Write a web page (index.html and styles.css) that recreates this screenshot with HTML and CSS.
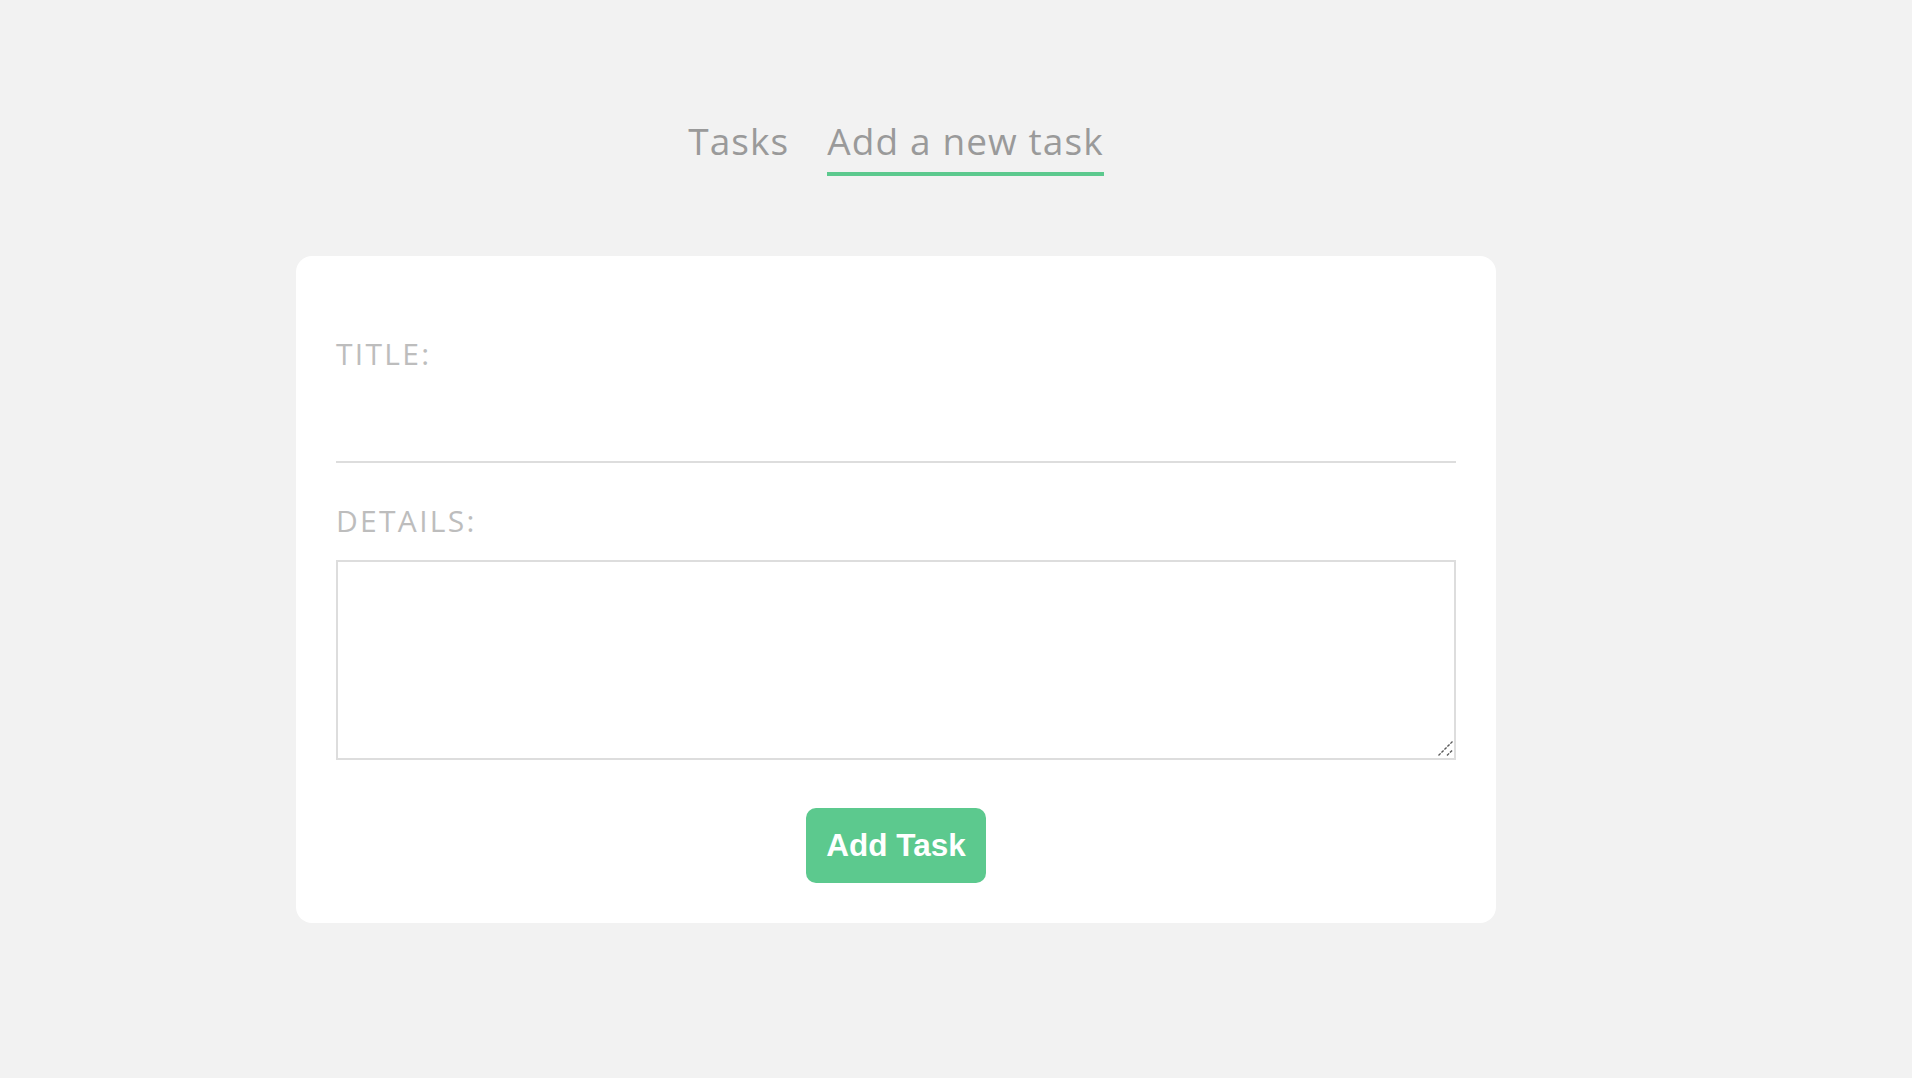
FILE: index.html
```html
<!DOCTYPE html>
<html lang="en">
<head>
<meta charset="utf-8">
<title>Add a new task</title>
<link rel="stylesheet" href="styles.css">
</head>
<body>
<div class="page">
  <nav class="tabs">
    <a class="tab" href="#">Tasks</a>
    <a class="tab tab-active" href="#">Add a new task</a>
  </nav>
  <form class="card">
    <label class="label" for="title">Title:</label>
    <input class="input" id="title" type="text">
    <label class="label label-details" for="details">Details:</label>
    <div class="textarea-wrap">
      <textarea class="textarea" id="details"></textarea>
      <svg class="grip" width="16" height="16" viewBox="0 0 16 16" aria-hidden="true">
        <path d="M0.5 14.5 L14.5 0.5 M9 14.5 L14.5 9" stroke="#5a5a5a" stroke-width="1.4" stroke-dasharray="3 1.2" fill="none"/>
      </svg>
    </div>
    <div class="actions">
      <button class="btn" type="button">Add Task</button>
    </div>
  </form>
</div>
</body>
</html>
```
FILE: styles.css
```css
html, body {
  margin: 0;
  padding: 0;
  background: #f2f2f2;
}
body {
  font-family: "Open Sans", "DejaVu Sans", sans-serif;
  padding-right: 120px;
}
.page {
  width: 1200px;
  margin: 0 auto;
  padding-top: 119px;
}
.tabs {
  display: flex;
  justify-content: center;
  gap: 38px;
}
.tab {
  font-size: 37px;
  line-height: 44px;
  color: #9a9a9a;
  text-decoration: none;
  letter-spacing: 1.1px;
  padding-bottom: 9px;
  border-bottom: 4px solid transparent;
}
.tab-active {
  border-bottom-color: #5cc98e;
}
.card {
  margin-top: 80px;
  background: #fff;
  border-radius: 16px;
  padding: 80px 40px 40px;
  display: flex;
  flex-direction: column;
}
.label {
  display: block;
  font-size: 30px;
  line-height: 36px;
  text-transform: uppercase;
  color: #bdbdbd;
  letter-spacing: 2.3px;
}
.input {
  display: block;
  box-sizing: border-box;
  width: 100%;
  height: 91px;
  margin: 0;
  border: none;
  border-bottom: 2px solid #dddddd;
  outline: none;
  font-size: 24px;
  background: transparent;
}
.label-details {
  margin-top: 40px;
}
.textarea-wrap {
  position: relative;
  margin-top: 21px;
}
.textarea {
  display: block;
  box-sizing: border-box;
  width: 100%;
  height: 200px;
  margin: 0;
  border: 2px solid #dddddd;
  outline: none;
  font-size: 20px;
  resize: none;
}
.grip {
  position: absolute;
  right: 2px;
  bottom: 3px;
  pointer-events: none;
}
.actions {
  display: flex;
  justify-content: center;
  margin-top: 48px;
}
.btn {
  box-sizing: border-box;
  height: 75px;
  width: 180px;
  padding: 0;
  border: none;
  border-radius: 10px;
  background: #5cc98e;
  color: #fff;
  font-family: "Liberation Sans", Arial, sans-serif;
  font-weight: bold;
  font-size: 31.5px;
}
```
